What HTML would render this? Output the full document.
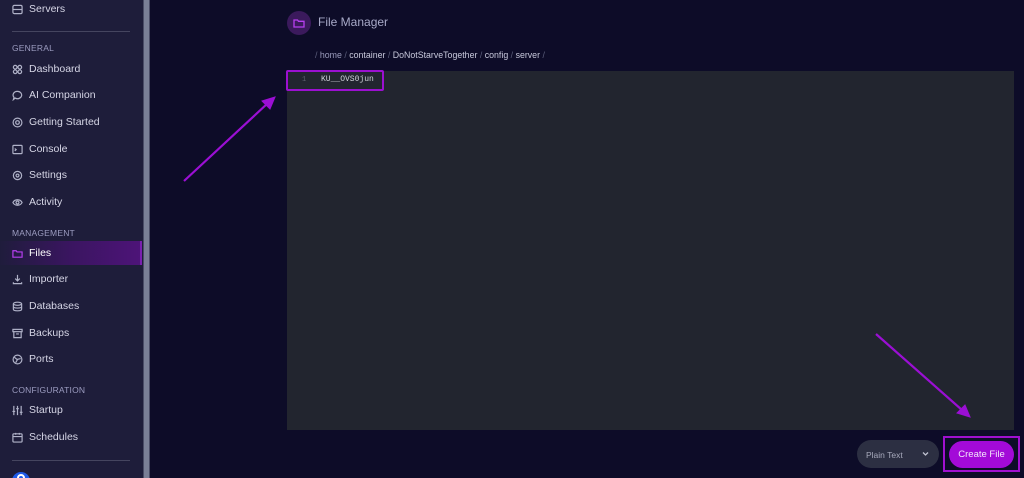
<!DOCTYPE html>
<html style="overflow:hidden;height:478px"><head><meta charset="utf-8"><style>
*{margin:0;padding:0;box-sizing:border-box}
body{width:1024px;height:478px;overflow:hidden;background:#0d0c28;font-family:"Liberation Sans",sans-serif;position:relative}
#sb{position:absolute;left:0;top:0;width:143px;height:478px;background:#1e1d3a;overflow:hidden}
#scr{position:absolute;left:143px;top:0;width:7px;height:478px;background:#4a4c66}
#scr:after{content:"";position:absolute;left:1px;top:0;width:5px;height:478px;background:#7a7f96}
.it{position:absolute;left:12px;font-size:10.5px;color:#d6d6e6;display:flex;align-items:center;gap:6px;height:14px}
.it svg{width:11px;height:11px;stroke:#b0b2c8;fill:none;stroke-width:1.3}
.hd{position:absolute;left:12px;font-size:8.5px;color:#9c9cc0;letter-spacing:.2px}
.hr{position:absolute;left:12px;width:118px;height:1px;background:#45455f}
#act{position:absolute;left:0;top:241px;width:142px;height:24px;background:linear-gradient(90deg,#1f1c3c,#3a1560 50%,#4d1478);border-right:2px solid #7a20b0}
</style></head><body>
<div id="sb">
<div class="it" style="top:2px"><svg viewBox="0 0 12 12"><rect x="1" y="1.5" width="10" height="9" rx="1.5"/><path d="M1 6h10"/></svg>Servers</div>
<div class="hr" style="top:31px"></div>
<div class="hd" style="top:43px">GENERAL</div>
<div class="it" style="top:62px"><svg viewBox="0 0 12 12"><circle cx="3.5" cy="3.5" r="2"/><circle cx="8.5" cy="3.5" r="2"/><circle cx="3.5" cy="8.5" r="2"/><circle cx="8.5" cy="8.5" r="2"/></svg>Dashboard</div>
<div class="it" style="top:88px"><svg viewBox="0 0 12 12"><path d="M6 1.5a4.5 4 0 1 1-2.5 7.3L1.5 10.5l.7-2.5A4.5 4 0 0 1 6 1.5z"/></svg>AI Companion</div>
<div class="it" style="top:115px"><svg viewBox="0 0 12 12"><circle cx="6" cy="6" r="4.8"/><circle cx="6" cy="6" r="2"/></svg>Getting Started</div>
<div class="it" style="top:142px"><svg viewBox="0 0 12 12"><rect x="1" y="1.5" width="10" height="9" rx="1"/><path d="M3 5l1.5 1.2L3 7.5"/></svg>Console</div>
<div class="it" style="top:168px"><svg viewBox="0 0 12 12"><circle cx="6" cy="6" r="4.5"/><circle cx="6" cy="6" r="1.6"/></svg>Settings</div>
<div class="it" style="top:195px"><svg viewBox="0 0 12 12"><path d="M1 6c2-4 8-4 10 0c-2 4-8 4-10 0z"/><circle cx="6" cy="6" r="1.6"/></svg>Activity</div>
<div class="hd" style="top:228px">MANAGEMENT</div>
<div id="act"></div>
<div class="it" style="top:246px;color:#fff"><svg viewBox="0 0 12 12" style="stroke:#b73ff0"><path d="M1 3h3.5l1 1.3H11V10H1z"/></svg>Files</div>
<div class="it" style="top:272px"><svg viewBox="0 0 12 12"><path d="M6 1v6.5M3.5 5L6 7.5 8.5 5M1.5 9v1.5h9V9"/></svg>Importer</div>
<div class="it" style="top:299px"><svg viewBox="0 0 12 12"><ellipse cx="6" cy="3" rx="4.5" ry="1.7"/><path d="M1.5 3v6c0 2.3 9 2.3 9 0V3M1.5 6c0 2.3 9 2.3 9 0"/></svg>Databases</div>
<div class="it" style="top:326px"><svg viewBox="0 0 12 12"><rect x="1" y="1.5" width="10" height="2.5"/><path d="M2 4v6.5h8V4M4.5 6.5h3"/></svg>Backups</div>
<div class="it" style="top:352px"><svg viewBox="0 0 12 12"><circle cx="6" cy="6" r="4.8"/><path d="M2.5 3.5l3 2.5 4 -1M4 9.5l2-3.5"/></svg>Ports</div>
<div class="hd" style="top:385px">CONFIGURATION</div>
<div class="it" style="top:403px"><svg viewBox="0 0 12 12"><path d="M2 1v10M6 1v10M10 1v10M0.5 7h3M4.5 4h3M8.5 8h3"/></svg>Startup</div>
<div class="it" style="top:430px"><svg viewBox="0 0 12 12"><rect x="1" y="2" width="10" height="9" rx="1"/><path d="M1 5h10M4 1v2M8 1v2"/></svg>Schedules</div>
<div class="hr" style="top:460px"></div>
<div style="position:absolute;left:12px;top:472px;width:18px;height:18px;border-radius:50%;background:#1f5be8"><div style="position:absolute;left:5px;top:2px;width:8px;height:8px;border-radius:50%;border:2px solid #fff"></div></div>
</div>
<div id="scr"></div>

<div style="position:absolute;left:287px;top:11px;width:24px;height:24px;border-radius:50%;background:#3b1a5c"></div>
<svg style="position:absolute;left:293px;top:17px" width="12" height="12" viewBox="0 0 12 12"><path d="M1 3h3.5l1 1.3H11V10H1z" fill="none" stroke="#b73ff0" stroke-width="1.3"/></svg>
<div style="position:absolute;left:318px;top:15px;font-size:12px;color:#a8aac8">File Manager</div>
<div style="position:absolute;left:315px;top:50px;font-size:8.8px;color:#c8c9dc;white-space:nowrap"><span style="color:#5c5f7c">/ </span><span style="color:#9a9cbc">home</span><span style="color:#5c5f7c"> / </span>container<span style="color:#5c5f7c"> / </span>DoNotStarveTogether<span style="color:#5c5f7c"> / </span>config<span style="color:#5c5f7c"> / </span>server<span style="color:#5c5f7c"> /</span></div>

<div style="position:absolute;left:287px;top:71px;width:727px;height:359px;background:#22252f"></div>
<div style="position:absolute;left:286px;top:70px;width:98px;height:21px;border:2px solid #9b10d0;border-radius:2px"></div>
<div style="position:absolute;left:302px;top:76px;font-size:7px;color:#5c606e;font-family:'Liberation Mono',monospace">1</div>
<div style="position:absolute;left:321px;top:75px;font-size:8px;color:#d0d2da;font-family:'Liberation Mono',monospace">KU__OVS0jun</div>

<div style="position:absolute;left:857px;top:440px;width:82px;height:28px;border-radius:14px;background:#2c2f42"></div>
<div style="position:absolute;left:866px;top:450px;font-size:8.5px;color:#a8aabc">Plain Text</div>
<svg style="position:absolute;left:922px;top:451px" width="7" height="6" viewBox="0 0 7 6"><path d="M1 1.5l2.5 2.5 2.5-2.5" stroke="#c0c2d0" stroke-width="1.3" fill="none"/></svg>
<div style="position:absolute;left:943px;top:436px;width:77px;height:36px;border:2px solid #a010d0"></div>
<div style="position:absolute;left:949px;top:441px;width:65px;height:27px;border-radius:14px;background:#a30ad8;color:#f3e6fb;font-size:9.5px;text-align:center;line-height:27px">Create File</div>

<svg style="position:absolute;left:0;top:0" width="1024" height="478">
<g stroke="#9b0fd4" stroke-width="2.2" fill="#9b0fd4">
<line x1="184" y1="181" x2="268" y2="103"/>
<polygon points="275,97 262,101 270,109" stroke-width="1"/>
<line x1="876" y1="334" x2="962" y2="410"/>
<polygon points="970,417 957,413 965,405" stroke-width="1"/>
</g></svg>
</body></html>
